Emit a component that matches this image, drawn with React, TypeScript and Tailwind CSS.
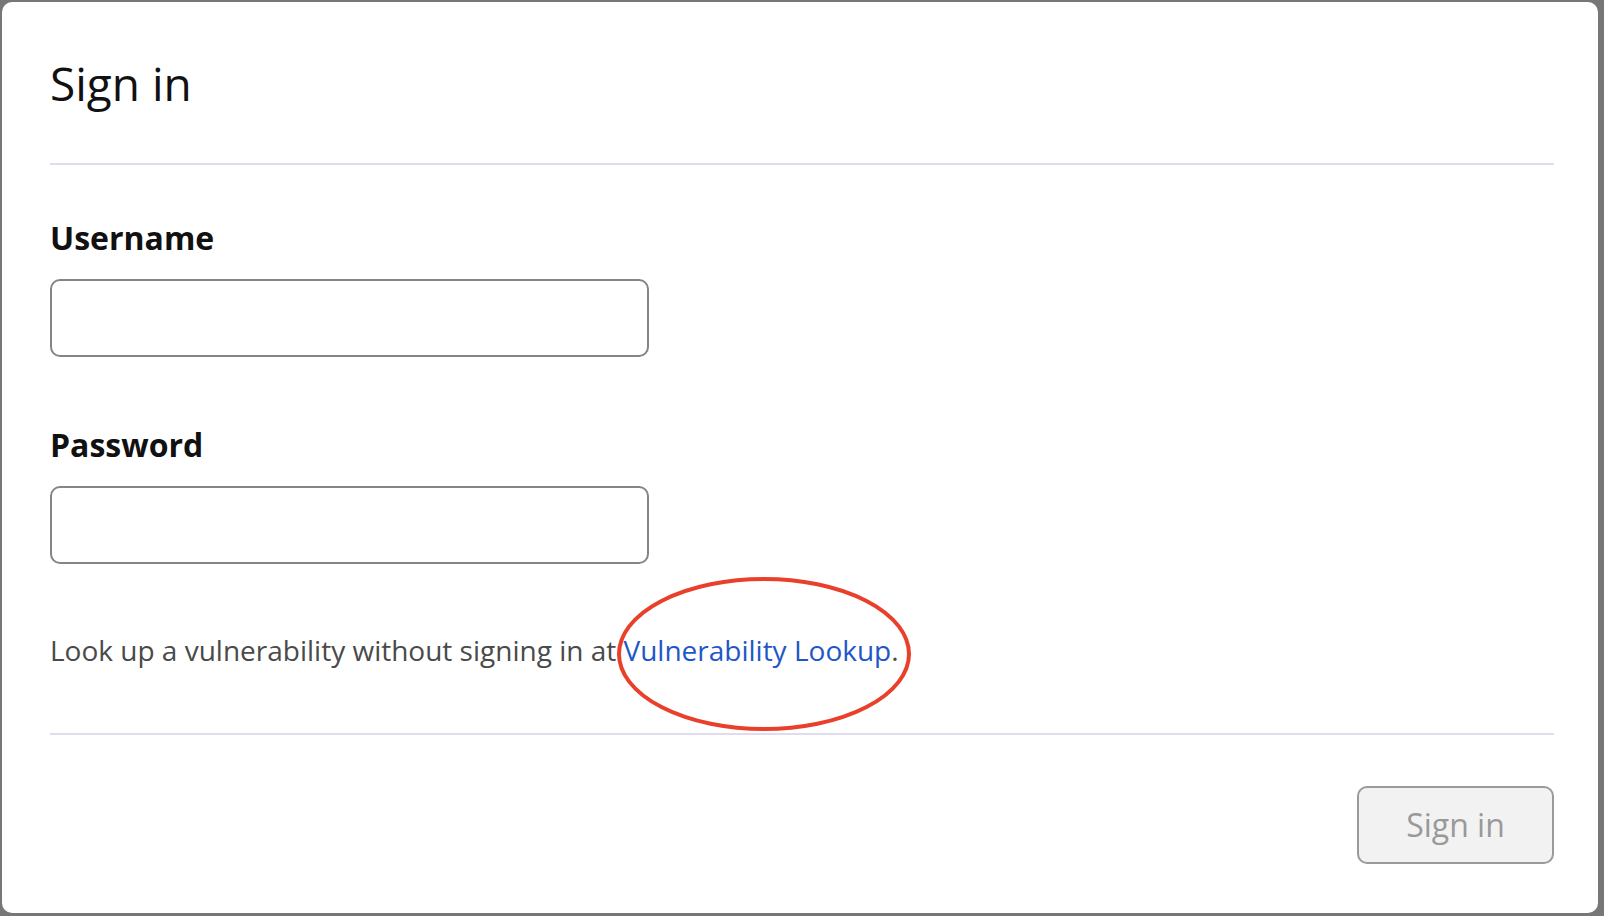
import React from 'react';

const font = { fontFamily: '"Open Sans", "Noto Sans", sans-serif' };

const Field = ({ label, type, top }: { label: string; type: string; top: string }) => (
  <div className={`flex flex-col ${top}`}>
    <label className="text-[32px] leading-[44px] font-bold text-[#111111]">{label}</label>
    <input
      type={type}
      className="mt-[19px] w-[599px] h-[78px] rounded-[10px] border-2 border-[#858585] bg-white px-4 text-[28px] outline-none"
    />
  </div>
);

const App = () => {
  return (
    <div className="w-screen h-[916px] bg-[#777777] pt-[2px] pl-[2px] pr-[6px] pb-[3px]" style={font}>
      <div className="relative h-full bg-white rounded-[10px] pl-[48px] pr-[44px] pt-[52px] flex flex-col">
        <h1 className="text-[46px] leading-[58px] font-normal text-[#111111]">Sign in</h1>
        <div className="mt-[51px] h-[2px] bg-[#dedcee]" />
        <Field label="Username" type="text" top="mt-[51px]" />
        <Field label="Password" type="password" top="mt-[66px]" />
        <p className="mt-[66px] text-[28px] leading-[40px] text-[#4a4a4a]">
          Look up a vulnerability without signing in at{' '}
          <a href="#" className="text-[#1f57c8]">Vulnerability Lookup</a>.
        </p>
        <div className="mt-[63px] h-[2px] bg-[#dedcee]" />
        <div className="mt-[51px] flex justify-end">
          <button className="w-[197px] h-[78px] rounded-[10px] border-2 border-[#9a9a9a] bg-[#f2f2f2] text-[32px] text-[#999999]">
            Sign in
          </button>
        </div>
        <svg className="absolute left-[613px] top-[574px] pointer-events-none" width="298" height="156" viewBox="0 0 298 156">
          <ellipse cx="149" cy="78" rx="145" ry="75" fill="none" stroke="#e8402a" strokeWidth="4" />
        </svg>
      </div>
    </div>
  );
};

export default App;
